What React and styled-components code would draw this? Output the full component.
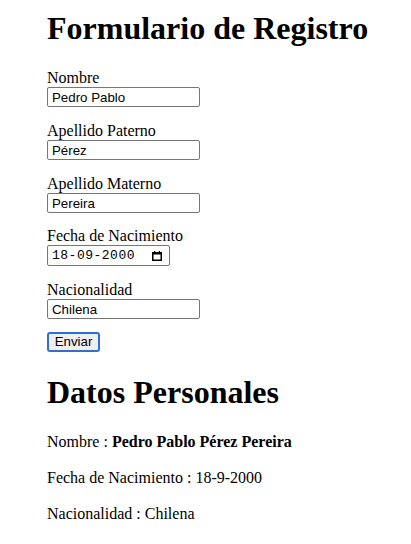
import styled, { createGlobalStyle } from 'styled-components';

const GlobalStyle = createGlobalStyle`
  html, body {
    margin: 0;
    padding: 0;
    background: #ffffff;
  }
  body {
    font-family: "Liberation Serif", "Times New Roman", serif;
    font-size: 16px;
    color: #000000;
  }
`;

const Page = styled.div`
  padding: 10px 0 0 47px;
`;

const Heading = styled.h1`
  margin: 0 0 21.4px;
  font-size: 32px;
  line-height: 37px;
  font-weight: bold;
`;

const Form = styled.form`
  display: flex;
  flex-direction: column;
  align-items: flex-start;
  gap: 13.6px;
  margin: 0;
`;

const Field = styled.div`
  display: flex;
  flex-direction: column;
  align-items: flex-start;
`;

const Label = styled.label`
  display: block;
  line-height: 19px;
`;

const TextInput = styled.input`
  box-sizing: border-box;
  width: 153px;
  height: 20px;
  margin: 0;
  padding: 1px 4px 0;
  border: 1px solid #767676;
  border-radius: 2px;
  font-family: "Liberation Sans", Arial, sans-serif;
  font-size: 13.3px;
  color: #000000;
  outline: none;
`;

const DateBox = styled.div`
  box-sizing: border-box;
  width: 123px;
  height: 21px;
  display: flex;
  align-items: center;
  justify-content: space-between;
  padding: 0 7px 0 4px;
  border: 1px solid #767676;
  border-radius: 2px;
  font-family: "Liberation Mono", "Courier New", monospace;
  font-size: 13px;
  letter-spacing: 0.5px;
`;

const SubmitButton = styled.button`
  box-sizing: border-box;
  width: 53px;
  height: 20px;
  margin: 0;
  padding: 0;
  background: #efefef;
  border: 2px solid #2d6fd8;
  border-radius: 3px;
  font-family: "Liberation Sans", Arial, sans-serif;
  font-size: 13.3px;
  line-height: 16px;
  color: #000000;
`;

const Section = styled.div`
  margin-top: 21.4px;
`;

const Line = styled.p`
  margin: 0 0 16px;
  line-height: 20px;
`;

function CalendarIcon() {
  return (
    <svg width="10" height="10" viewBox="0 0 10 10">
      <rect x="0.75" y="1.75" width="8.5" height="7.5" fill="none" stroke="#000" strokeWidth="1.5" />
      <rect x="0" y="1" width="10" height="2.5" fill="#000" />
      <rect x="2" y="0" width="1.2" height="2" fill="#000" />
      <rect x="6.8" y="0" width="1.2" height="2" fill="#000" />
    </svg>
  );
}

const fields = [
  { id: 'nombre', label: 'Nombre', value: 'Pedro Pablo' },
  { id: 'paterno', label: 'Apellido Paterno', value: 'Pérez' },
  { id: 'materno', label: 'Apellido Materno', value: 'Pereira' },
];

function App() {
  return (
    <Page>
      <GlobalStyle />
      <Heading>Formulario de Registro</Heading>
      <Form onSubmit={(e) => e.preventDefault()}>
        {fields.map((f) => (
          <Field key={f.id}>
            <Label htmlFor={f.id}>{f.label}</Label>
            <TextInput id={f.id} defaultValue={f.value} />
          </Field>
        ))}
        <Field>
          <Label>Fecha de Nacimiento</Label>
          <DateBox>
            <span>18-09-2000</span>
            <CalendarIcon />
          </DateBox>
        </Field>
        <Field>
          <Label htmlFor="nacionalidad">Nacionalidad</Label>
          <TextInput id="nacionalidad" defaultValue="Chilena" />
        </Field>
        <SubmitButton type="submit">Enviar</SubmitButton>
      </Form>
      <Section>
        <Heading as="h2">Datos Personales</Heading>
        <Line>
          Nombre : <b>Pedro Pablo Pérez Pereira</b>
        </Line>
        <Line>Fecha de Nacimiento : 18-9-2000</Line>
        <Line>Nacionalidad : Chilena</Line>
      </Section>
    </Page>
  );
}

export default App;
